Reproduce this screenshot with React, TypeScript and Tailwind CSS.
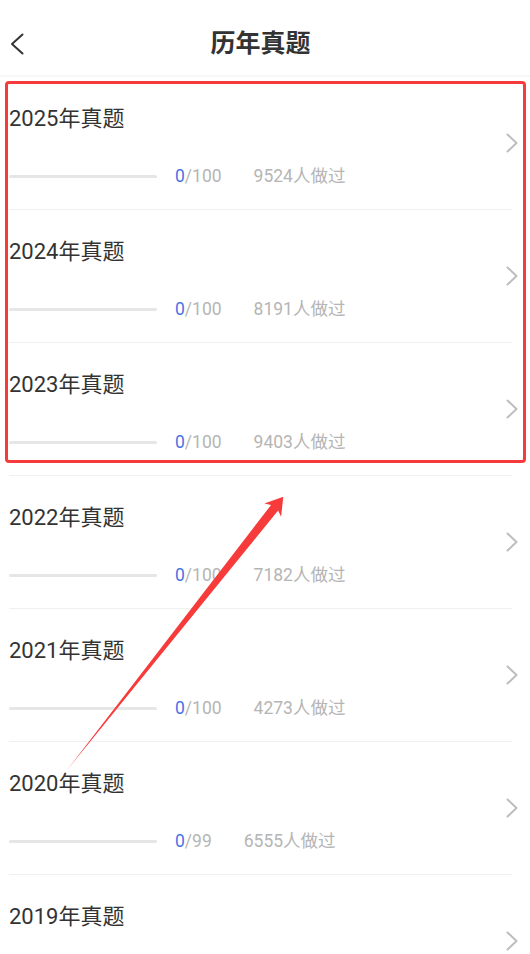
import React from "react";

const rows = [
  { year: 2025, total: 100, count: 9524 },
  { year: 2024, total: 100, count: 8191 },
  { year: 2023, total: 100, count: 9403 },
  { year: 2022, total: 100, count: 7182 },
  { year: 2021, total: 100, count: 4273 },
  { year: 2020, total: 99, count: 6555 },
  { year: 2019, total: 100, count: 5210 },
];

const font = { fontFamily: "Roboto, 'Noto Sans CJK SC', sans-serif" };

function Row({ year, total, count }: { year: number; total: number; count: number }) {
  return (
    <div>
      <div className="flex h-[132px] pl-[9px] pr-[12px]">
        <div className="flex flex-1 flex-col pt-[27px]">
          <div className="h-[30px] text-[22px] leading-[30px] text-[#333333]">{year}年真题</div>
          <div className="mt-[30px] flex h-[24px] items-center">
            <div className="h-[3px] w-[148px] rounded-full bg-[#e6e6e6]" />
            <div className="ml-[18px] text-[17.5px] leading-[24px] text-[#b5b5b5]">
              <span className="text-[#4873e4]">0</span>/{total}
            </div>
            <div className="ml-[32px] text-[17.5px] leading-[24px] text-[#b5b5b5]">{count}人做过</div>
          </div>
        </div>
        <svg width="12" height="20" viewBox="0 0 12 20" className="self-center">
          <polyline points="1.5,1.5 10.5,10 1.5,18.5" fill="none" stroke="#bdbdbd" strokeWidth="2" strokeLinecap="round" strokeLinejoin="round" />
        </svg>
      </div>
      <div className="ml-[9px] mr-[18px] h-px bg-[#f0f0f0]" />
    </div>
  );
}

export default function App() {
  return (
    <div className="relative h-[954px] w-[530px] overflow-hidden bg-white" style={font}>
      <div className="relative flex h-[75px] items-center justify-center pr-[9px]">
        <svg width="14" height="22" viewBox="0 0 14 22" className="absolute left-[10px] top-[33px]">
          <polyline points="12.5,1.5 2,11 12.5,20.5" fill="none" stroke="#333333" strokeWidth="2" strokeLinecap="round" strokeLinejoin="round" />
        </svg>
        <div className="mt-[13px] text-[25px] font-bold leading-[32px] text-[#333333]">历年真题</div>
      </div>
      <div className="h-[2px] bg-[#f7f7f7]" />
      <div className="flex flex-col">
        {rows.map((r) => (
          <Row key={r.year} {...r} />
        ))}
      </div>
      <div className="pointer-events-none absolute left-[5px] top-[81px] h-[382px] w-[521px] rounded-[4px] border-[3px] border-[#f73b3b]" />
      <svg className="pointer-events-none absolute left-0 top-0" width="530" height="954" viewBox="0 0 530 954">
        <polygon points="283.3,496.7 264.4,503.4 271.1,504.9 67.4,769.6 278.1,510.5 281.1,516.7" fill="#f73b3b" />
      </svg>
    </div>
  );
}
